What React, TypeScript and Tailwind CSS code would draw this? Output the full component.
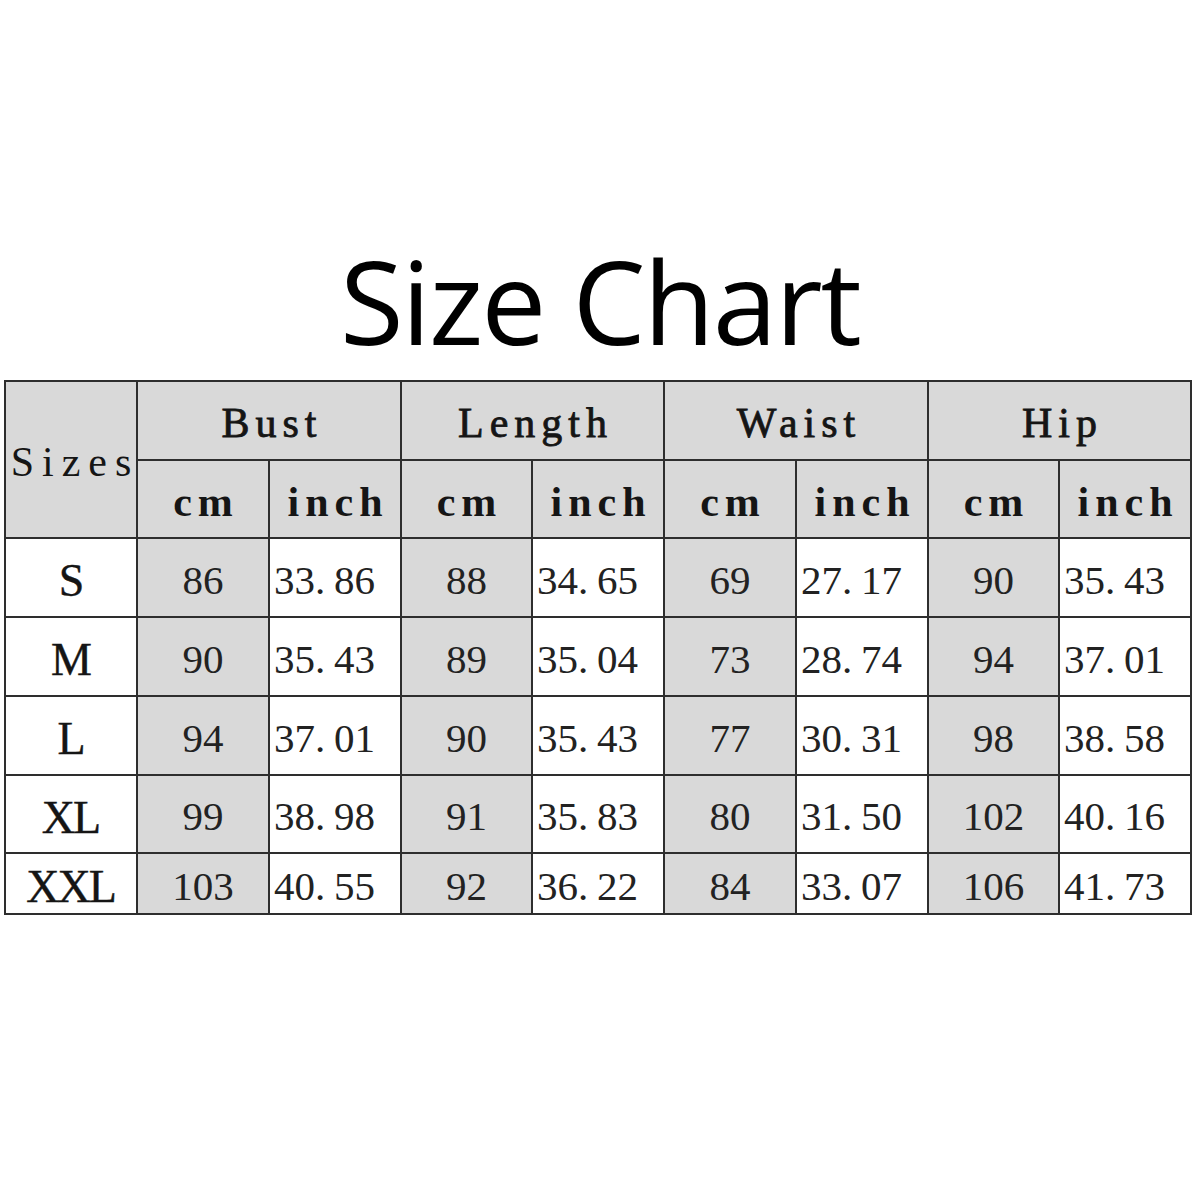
const headFont = { fontFamily: '"Liberation Serif", "Times New Roman", serif' };

const groups = ['Bust', 'Length', 'Waist', 'Hip'];

const rows = [
  { size: 'S', values: ['86', '33.86', '88', '34.65', '69', '27.17', '90', '35.43'] },
  { size: 'M', values: ['90', '35.43', '89', '35.04', '73', '28.74', '94', '37.01'] },
  { size: 'L', values: ['94', '37.01', '90', '35.43', '77', '30.31', '98', '38.58'] },
  { size: 'XL', values: ['99', '38.98', '91', '35.83', '80', '31.50', '102', '40.16'] },
  { size: 'XXL', values: ['103', '40.55', '92', '36.22', '84', '33.07', '106', '41.73'] },
];

// the source uses a font where the period takes a full half-width slot
function Num({ v }: { v: string }) {
  const [a, b] = v.split('.');
  if (b === undefined) return <>{v}</>;
  return (
    <>
      {a}
      <span className="inline-block w-[19px]">.</span>
      {b}
    </>
  );
}

const cell = 'flex items-center border-r-2 border-b-2 border-[#2e2e2e] pt-[6px]';

export default function App() {
  return (
    <div className="w-[1200px] h-[1200px] bg-white" style={headFont}>
      <div
        className="pt-[242px] mb-[22px] text-center text-[116px] leading-none tracking-[-2px] text-black"
        style={{ fontFamily: '"Open Sans", "Noto Sans", sans-serif' }}
      >
        Size Chart
      </div>

      <div className="ml-[4px] w-[1188px] grid grid-cols-[132px_132px_132px_131px_132px_132px_132px_131px_132px] grid-rows-[79px_78px_79px_79px_79px_78px_61px] border-l-2 border-t-2 border-[#2e2e2e] text-[#151515]">
        {/* header */}
        <div className={`${cell} row-span-2 bg-[#d9d9d9] justify-center text-[42px] tracking-[8px] pl-[8px]`}>
          Sizes
        </div>
        {groups.map((g) => (
          <div
            key={g}
            className={`${cell} col-span-2 bg-[#d9d9d9] justify-center text-[42px] tracking-[6px] pl-[6px] [-webkit-text-stroke:0.8px_#151515]`}
          >
            {g}
          </div>
        ))}
        {groups.map((g) => (
          <>
            <div key={g + 'cm'} className={`${cell} bg-[#d9d9d9] justify-center text-[42px] font-bold tracking-[6px] pl-[6px]`}>
              cm
            </div>
            <div key={g + 'in'} className={`${cell} bg-[#d9d9d9] justify-center text-[42px] font-bold tracking-[6px] pl-[6px]`}>
              inch
            </div>
          </>
        ))}

        {/* body */}
        {rows.map((r) => (
          <>
            <div key={r.size} className={`${cell} bg-white justify-center text-[46px] tracking-[-2px] pr-[1px] [-webkit-text-stroke:0.4px_#151515]`}>
              {r.size}
            </div>
            {r.values.map((v, i) =>
              i % 2 === 0 ? (
                <div key={r.size + i} className={`${cell} bg-[#d9d9d9] justify-center text-[41px] text-[#222]`}>
                  {v}
                </div>
              ) : (
                <div key={r.size + i} className={`${cell} bg-white justify-start pl-[4px] text-[41px] text-[#222]`}>
                  <Num v={v} />
                </div>
              )
            )}
          </>
        ))}
      </div>
    </div>
  );
}
